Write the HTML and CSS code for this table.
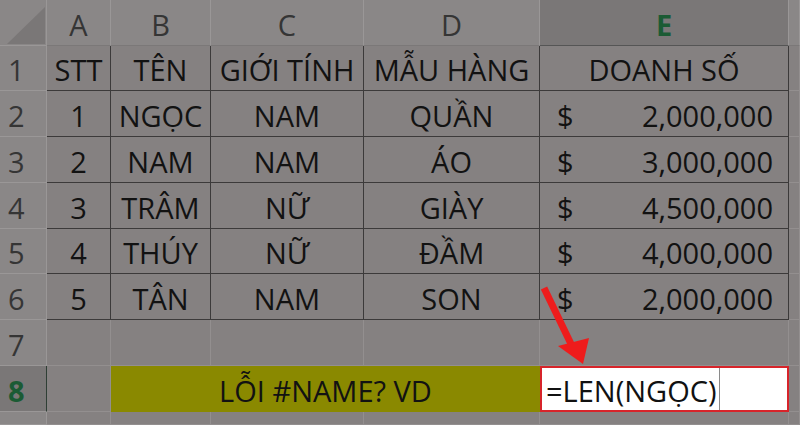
FILE: index.html
```html
<!DOCTYPE html>
<html lang="vi">
<head>
<meta charset="utf-8">
<title>Excel</title>
<link rel="stylesheet" href="styles.css">
</head>
<body>
<div class="sheet">
  <div class="hd corner"><span class="tri"></span></div>
  <div class="hd col">A</div>
  <div class="hd col">B</div>
  <div class="hd col">C</div>
  <div class="hd col">D</div>
  <div class="hd col sel">E</div>
  <div class="hd col"></div>

  <div class="hd row">1</div>
  <div class="c t">STT</div>
  <div class="c t">TÊN</div>
  <div class="c t">GIỚI TÍNH</div>
  <div class="c t">MẪU HÀNG</div>
  <div class="c t">DOANH SỐ</div>
  <div class="c"></div>

  <div class="hd row">2</div>
  <div class="c t">1</div>
  <div class="c t">NGỌC</div>
  <div class="c t">NAM</div>
  <div class="c t">QUẦN</div>
  <div class="c t money"><span>$</span><span>2,000,000</span></div>
  <div class="c"></div>

  <div class="hd row">3</div>
  <div class="c t">2</div>
  <div class="c t">NAM</div>
  <div class="c t">NAM</div>
  <div class="c t">ÁO</div>
  <div class="c t money"><span>$</span><span>3,000,000</span></div>
  <div class="c"></div>

  <div class="hd row">4</div>
  <div class="c t">3</div>
  <div class="c t">TRÂM</div>
  <div class="c t">NỮ</div>
  <div class="c t">GIÀY</div>
  <div class="c t money"><span>$</span><span>4,500,000</span></div>
  <div class="c"></div>

  <div class="hd row">5</div>
  <div class="c t">4</div>
  <div class="c t">THÚY</div>
  <div class="c t">NỮ</div>
  <div class="c t">ĐẦM</div>
  <div class="c t money"><span>$</span><span>4,000,000</span></div>
  <div class="c"></div>

  <div class="hd row">6</div>
  <div class="c t">5</div>
  <div class="c t">TÂN</div>
  <div class="c t">NAM</div>
  <div class="c t">SON</div>
  <div class="c t money"><span>$</span><span>2,000,000</span></div>
  <div class="c"></div>

  <div class="hd row">7</div>
  <div class="c"></div>
  <div class="c"></div>
  <div class="c"></div>
  <div class="c"></div>
  <div class="c"></div>
  <div class="c"></div>

  <div class="hd row rsel">8</div>
  <div class="c"></div>
  <div class="c merged">LỖI #NAME? VD</div>
  <div class="c edit"><span class="formula">=LEN(NGỌC)</span><span class="caret"></span></div>
  <div class="c"></div>

  <div class="hd row"></div>
  <div class="c"></div>
  <div class="c"></div>
  <div class="c"></div>
  <div class="c"></div>
  <div class="c"></div>
  <div class="c"></div>

  <svg class="arrow" width="800" height="425" viewBox="0 0 800 425">
    <line x1="544" y1="288" x2="572" y2="346" stroke="#ee1c1c" stroke-width="7" stroke-linecap="butt"/>
    <polygon points="583,364 558,346 589,338" fill="#ee1c1c"/>
  </svg>
</div>
</body>
</html>
```

FILE: styles.css
```css
html, body {
  margin: 0;
  padding: 0;
  background: #858181;
}
.sheet {
  position: relative;
  width: 800px;
  height: 425px;
  overflow: hidden;
  display: grid;
  grid-template-columns: 47px 64px 100px 153px 176px 249px 11px;
  grid-template-rows: 46px 45px 46px 46px 46px 45px 46px 46px 46px 13px;
  font-family: "Open Sans", "Noto Sans", sans-serif;
  font-size: 29px;
  color: #121212;
}
.hd {
  background: #8a8787;
  color: #353535;
  box-sizing: border-box;
  border-right: 1px solid #9a9797;
  border-bottom: 1px solid #9a9797;
  display: flex;
  align-items: center;
}
.corner {
  position: relative;
}
.tri {
  position: absolute;
  left: 7px;
  top: 7px;
  width: 38px;
  height: 37px;
  background: #7a7777;
  clip-path: polygon(100% 0, 100% 100%, 0 100%);
}
.col {
  justify-content: center;
  padding-top: 3px;
  border-bottom-color: #7b7878;
}
.sel {
  background: #7a7777;
  color: #1b5b34;
  font-weight: 700;
  border-bottom: 1px solid #555;
}
.row {
  padding-left: 8px;
  padding-top: 3px;
}
.rsel {
  background: #7a7777;
  color: #1b5b34;
  font-weight: 700;
  border-right: 1px solid #2f3f35;
}
.c {
  box-sizing: border-box;
  border-right: 1px solid #938f8f;
  border-bottom: 1px solid #938f8f;
  display: flex;
  align-items: center;
  justify-content: center;
  padding-top: 3px;
  white-space: nowrap;
}
.t {
  border-right-color: #3c3a3a;
  border-bottom-color: #3c3a3a;
}
.money {
  justify-content: space-between;
  padding-left: 17px;
  padding-right: 15px;
}
.merged {
  grid-column: span 3;
  background: #8a8900;
  border-right: none;
  border-bottom-color: #8a8900;
}
.edit {
  position: relative;
  background: #ffffff;
  border: 2px solid #d7242a;
  justify-content: flex-start;
  padding-left: 4px;
  color: #111;
}
.caret {
  position: absolute;
  left: 177px;
  top: 0;
  bottom: 0;
  width: 1px;
  background: #8a8a8a;
}
.arrow {
  position: absolute;
  left: 0;
  top: 0;
  pointer-events: none;
}
```
